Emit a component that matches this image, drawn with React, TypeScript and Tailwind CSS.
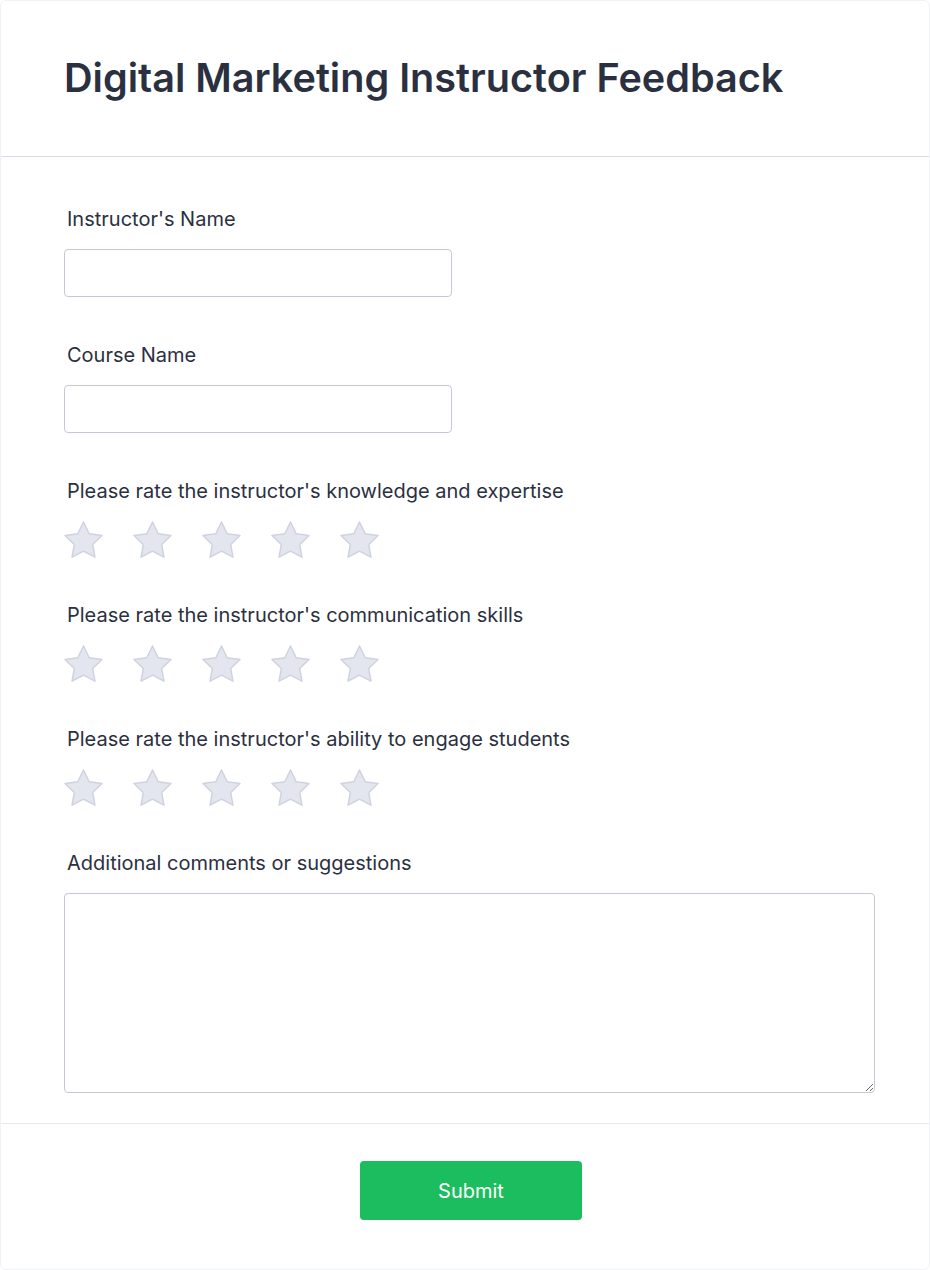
import React from "react";

function Star() {
  return (
    <svg width="39" height="37" viewBox="2.3 2.1 19.4 18.6" className="block">
      <path
        d="M12 2.6l2.85 5.9 6.45.88-4.7 4.5 1.16 6.4L12 17.2l-5.76 3.08 1.16-6.4-4.7-4.5 6.45-.88z"
        fill="#e3e6ef"
        stroke="#cfd2df"
        strokeWidth="0.75"
        strokeLinejoin="round"
      />
    </svg>
  );
}

function Stars() {
  return (
    <div className="mt-4 flex h-[36px] items-center gap-[30px]">
      {[0, 1, 2, 3, 4].map((i) => (
        <Star key={i} />
      ))}
    </div>
  );
}

function Label({ children }: { children: React.ReactNode }) {
  return (
    <div className="pl-[3px] text-[20px] leading-7 font-normal text-[#2b3041]">
      {children}
    </div>
  );
}

export default function App() {
  return (
    <div
      className="flex h-[1270px] w-[930px] flex-col overflow-hidden rounded-md border border-[#f1f2f5] bg-white"
      style={{ fontFamily: "Inter, 'Noto Sans', sans-serif" }}
    >
      <div className="flex h-[156px] items-center border-b border-[#d9dbe7] px-[63px]">
        <h1 className="text-[39.6px] leading-tight font-semibold text-[#2b3041]">
          Digital Marketing Instructor Feedback
        </h1>
      </div>
      <div className="flex flex-col gap-[44px] px-[63px] pt-12 pb-[30px]">
        <div>
          <Label>Instructor's Name</Label>
          <input className="mt-4 block h-[48px] w-[388px] rounded border border-[#c6c8d6] bg-white" />
        </div>
        <div>
          <Label>Course Name</Label>
          <input className="mt-4 block h-[48px] w-[388px] rounded border border-[#c6c8d6] bg-white" />
        </div>
        <div>
          <Label>Please rate the instructor's knowledge and expertise</Label>
          <Stars />
        </div>
        <div>
          <Label>Please rate the instructor's communication skills</Label>
          <Stars />
        </div>
        <div>
          <Label>Please rate the instructor's ability to engage students</Label>
          <Stars />
        </div>
        <div>
          <Label>Additional comments or suggestions</Label>
          <textarea className="mt-4 block h-[200px] w-[811px] rounded border border-[#c6c8d6] bg-white" />
        </div>
      </div>
      <div className="flex justify-center border-t border-[#e6e8ef] pt-[37px] pl-3">
        <button className="h-[59px] w-[222px] rounded-[4px] bg-[#1bbd5e] text-[20px] font-normal text-white">
          Submit
        </button>
      </div>
    </div>
  );
}
